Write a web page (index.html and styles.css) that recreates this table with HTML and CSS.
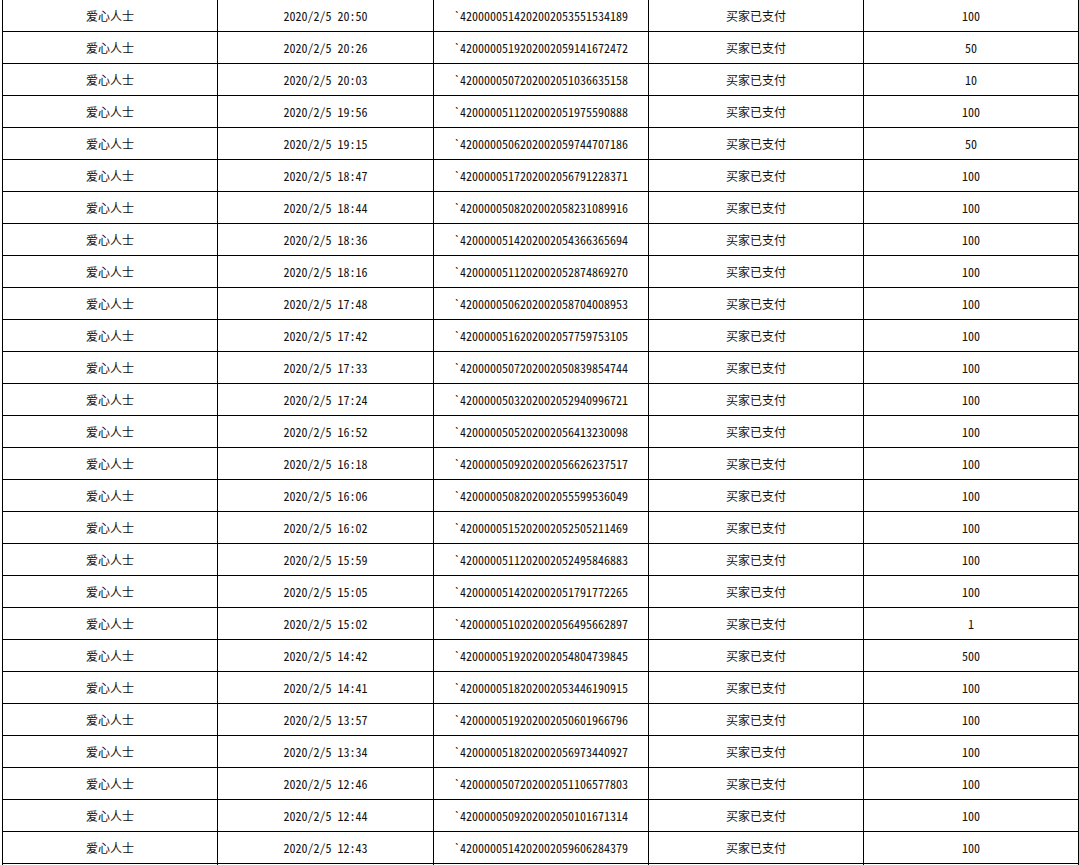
FILE: index.html
```html
<!DOCTYPE html>
<html lang="zh-CN">
<head>
    <meta charset="UTF-8">
    <title>捐款记录</title>
    <link rel="stylesheet" href="styles.css">
</head>
<body>
    <table class="record-table">
        <colgroup>
            <col class="col-name">
            <col class="col-time">
            <col class="col-order">
            <col class="col-state">
            <col class="col-amount">
        </colgroup>
        <tbody>
            <tr><td>爱心人士</td><td>2020/2/5 20:50</td><td>`4200000514202002053551534189</td><td>买家已支付</td><td>100</td></tr>
            <tr><td>爱心人士</td><td>2020/2/5 20:26</td><td>`4200000519202002059141672472</td><td>买家已支付</td><td>50</td></tr>
            <tr><td>爱心人士</td><td>2020/2/5 20:03</td><td>`4200000507202002051036635158</td><td>买家已支付</td><td>10</td></tr>
            <tr><td>爱心人士</td><td>2020/2/5 19:56</td><td>`4200000511202002051975590888</td><td>买家已支付</td><td>100</td></tr>
            <tr><td>爱心人士</td><td>2020/2/5 19:15</td><td>`4200000506202002059744707186</td><td>买家已支付</td><td>50</td></tr>
            <tr><td>爱心人士</td><td>2020/2/5 18:47</td><td>`4200000517202002056791228371</td><td>买家已支付</td><td>100</td></tr>
            <tr><td>爱心人士</td><td>2020/2/5 18:44</td><td>`4200000508202002058231089916</td><td>买家已支付</td><td>100</td></tr>
            <tr><td>爱心人士</td><td>2020/2/5 18:36</td><td>`4200000514202002054366365694</td><td>买家已支付</td><td>100</td></tr>
            <tr><td>爱心人士</td><td>2020/2/5 18:16</td><td>`4200000511202002052874869270</td><td>买家已支付</td><td>100</td></tr>
            <tr><td>爱心人士</td><td>2020/2/5 17:48</td><td>`4200000506202002058704008953</td><td>买家已支付</td><td>100</td></tr>
            <tr><td>爱心人士</td><td>2020/2/5 17:42</td><td>`4200000516202002057759753105</td><td>买家已支付</td><td>100</td></tr>
            <tr><td>爱心人士</td><td>2020/2/5 17:33</td><td>`4200000507202002050839854744</td><td>买家已支付</td><td>100</td></tr>
            <tr><td>爱心人士</td><td>2020/2/5 17:24</td><td>`4200000503202002052940996721</td><td>买家已支付</td><td>100</td></tr>
            <tr><td>爱心人士</td><td>2020/2/5 16:52</td><td>`4200000505202002056413230098</td><td>买家已支付</td><td>100</td></tr>
            <tr><td>爱心人士</td><td>2020/2/5 16:18</td><td>`4200000509202002056626237517</td><td>买家已支付</td><td>100</td></tr>
            <tr><td>爱心人士</td><td>2020/2/5 16:06</td><td>`4200000508202002055599536049</td><td>买家已支付</td><td>100</td></tr>
            <tr><td>爱心人士</td><td>2020/2/5 16:02</td><td>`4200000515202002052505211469</td><td>买家已支付</td><td>100</td></tr>
            <tr><td>爱心人士</td><td>2020/2/5 15:59</td><td>`4200000511202002052495846883</td><td>买家已支付</td><td>100</td></tr>
            <tr><td>爱心人士</td><td>2020/2/5 15:05</td><td>`4200000514202002051791772265</td><td>买家已支付</td><td>100</td></tr>
            <tr><td>爱心人士</td><td>2020/2/5 15:02</td><td>`4200000510202002056495662897</td><td>买家已支付</td><td>1</td></tr>
            <tr><td>爱心人士</td><td>2020/2/5 14:42</td><td>`4200000519202002054804739845</td><td>买家已支付</td><td>500</td></tr>
            <tr><td>爱心人士</td><td>2020/2/5 14:41</td><td>`4200000518202002053446190915</td><td>买家已支付</td><td>100</td></tr>
            <tr><td>爱心人士</td><td>2020/2/5 13:57</td><td>`4200000519202002050601966796</td><td>买家已支付</td><td>100</td></tr>
            <tr><td>爱心人士</td><td>2020/2/5 13:34</td><td>`4200000518202002056973440927</td><td>买家已支付</td><td>100</td></tr>
            <tr><td>爱心人士</td><td>2020/2/5 12:46</td><td>`4200000507202002051106577803</td><td>买家已支付</td><td>100</td></tr>
            <tr><td>爱心人士</td><td>2020/2/5 12:44</td><td>`4200000509202002050101671314</td><td>买家已支付</td><td>100</td></tr>
            <tr><td>爱心人士</td><td>2020/2/5 12:43</td><td>`4200000514202002059606284379</td><td>买家已支付</td><td>100</td></tr>
            <tr><td></td><td></td><td></td><td></td><td></td></tr>
        </tbody>
    </table>
</body>
</html>
```

FILE: styles.css
```css
body {
    margin: 0;
    background-color: #ffffff;
    font-family: "Noto Sans Mono CJK SC", "Noto Sans CJK SC", "DejaVu Sans Mono", monospace;
    font-size: 12px;
    color: #111;
}
.record-table {
    border-collapse: collapse;
    table-layout: fixed;
    width: 1076px;
    margin: -1px 0 0 2px;
}
.col-name { width: 215px; }
.col-time { width: 216px; }
.col-order { width: 215px; }
.col-state { width: 215px; }
.col-amount { width: 215px; }
.record-table td {
    border: 1px solid #000;
    height: 32px;
    padding: 1px 0 0;
    box-sizing: border-box;
    text-align: center;
    vertical-align: middle;
    white-space: nowrap;
    line-height: 14px;
}
```
